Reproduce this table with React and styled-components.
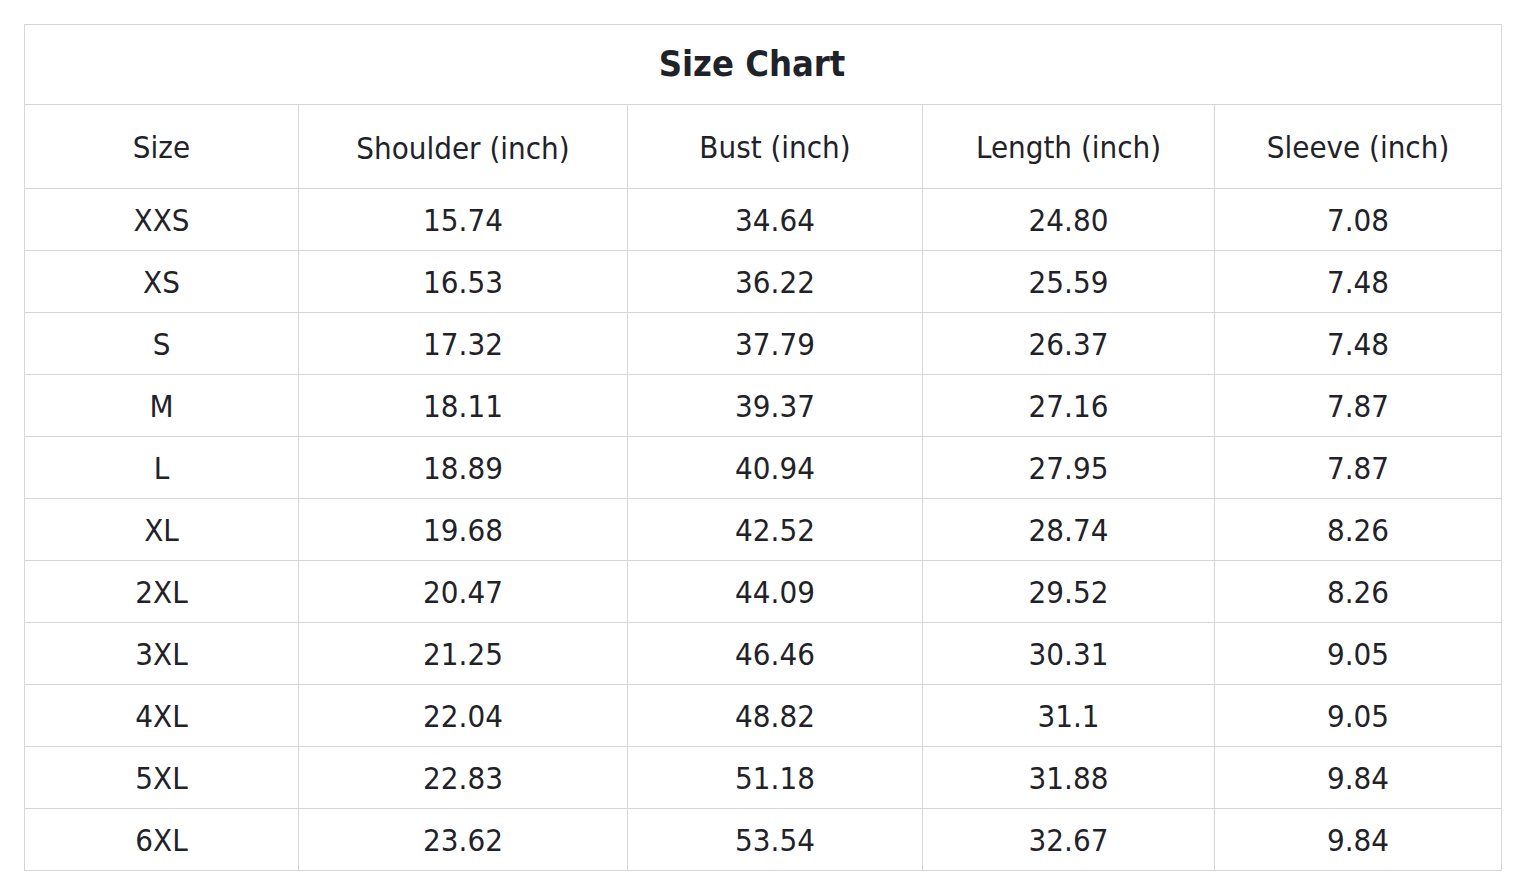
import React from "react";
import styled, { createGlobalStyle } from "styled-components";

const Global = createGlobalStyle`
  html, body { margin: 0; padding: 0; background: #ffffff; }
  body { font-family: "DejaVu Sans Condensed", "DejaVu Sans", "Noto Sans", sans-serif; font-stretch: condensed; color: #1f2329; }
`;

const Page = styled.div`
  padding: 24px 24px 0 24px;
`;

const Table = styled.table`
  width: 1477px;
  border-collapse: collapse;
  table-layout: fixed;
`;

const TitleCell = styled.th`
  height: 77px;
  padding: 0 22px 2px 0;
  border: 1px solid #d6d6d6;
  font-size: 36px;
  font-weight: 700;
  color: #1f2329;
  text-align: center;
  vertical-align: middle;
`;

const HeadCell = styled.th`
  height: ${(p) => (p.$low ? "80px" : "83px")};
  padding: ${(p) => (p.$low ? "3px 0 0 0" : "0")};
  border: 1px solid #d6d6d6;
  font-size: 31px;
  font-weight: 400;
  color: #1f2329;
  text-align: center;
  vertical-align: middle;
`;

const Cell = styled.td`
  height: 61px;
  padding: 0;
  border: 1px solid #d6d6d6;
  font-size: 31px;
  color: #1f2329;
  text-align: center;
  vertical-align: middle;
`;

const cols = [274, 329, 295, 292, 287];

const headers = [
  "Size",
  "Shoulder (inch)",
  "Bust (inch)",
  "Length (inch)",
  "Sleeve (inch)",
];

const rows = [
  ["XXS", "15.74", "34.64", "24.80", "7.08"],
  ["XS", "16.53", "36.22", "25.59", "7.48"],
  ["S", "17.32", "37.79", "26.37", "7.48"],
  ["M", "18.11", "39.37", "27.16", "7.87"],
  ["L", "18.89", "40.94", "27.95", "7.87"],
  ["XL", "19.68", "42.52", "28.74", "8.26"],
  ["2XL", "20.47", "44.09", "29.52", "8.26"],
  ["3XL", "21.25", "46.46", "30.31", "9.05"],
  ["4XL", "22.04", "48.82", "31.1", "9.05"],
  ["5XL", "22.83", "51.18", "31.88", "9.84"],
  ["6XL", "23.62", "53.54", "32.67", "9.84"],
];

export default function App() {
  return (
    <>
      <Global />
      <Page>
        <Table>
          <colgroup>
            {cols.map((w, i) => (
              <col key={i} style={{ width: w }} />
            ))}
          </colgroup>
          <thead>
            <tr>
              <TitleCell colSpan={5}>Size Chart</TitleCell>
            </tr>
            <tr>
              {headers.map((h, i) => (
                <HeadCell key={h} $low={i === 1}>
                  {h}
                </HeadCell>
              ))}
            </tr>
          </thead>
          <tbody>
            {rows.map((r) => (
              <tr key={r[0]}>
                {r.map((c, i) => (
                  <Cell key={i}>{c}</Cell>
                ))}
              </tr>
            ))}
          </tbody>
        </Table>
      </Page>
    </>
  );
}
